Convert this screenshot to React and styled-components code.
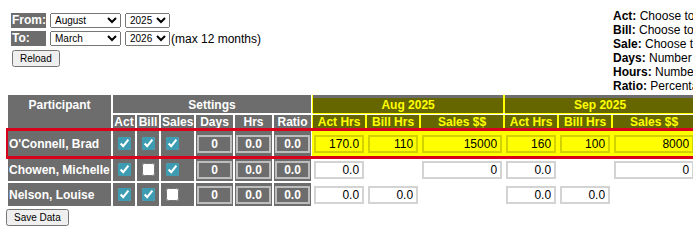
import React from "react";
import styled, { createGlobalStyle } from "styled-components";

const GlobalStyle = createGlobalStyle`
  html, body {
    overflow: hidden;
  }
  body {
    margin: 6px;
    background: #fff;
    color: #000;
    font-family: "Liberation Sans", Arial, sans-serif;
    font-size: 12px;
  }
`;

const MONTHS = [
  "January", "February", "March", "April", "May", "June",
  "July", "August", "September", "October", "November", "December",
];
const YEARS = ["2024", "2025", "2026", "2027"];

const periods = [
  { label: "Aug 2025", past: true },
  { label: "Sep 2025", past: true },
  { label: "Oct 2025" },
  { label: "Nov 2025" },
  { label: "Dec 2025" },
  { label: "Jan 2026" },
  { label: "Feb 2026" },
  { label: "Mar 2026" },
];

const legend = [
  ["Act:", "Choose to track actual hours for the participant"],
  ["Bill:", "Choose to track billable hours for the participant"],
  ["Sale:", "Choose to track sales dollars for the participant"],
  ["Days:", "Number of working days per month"],
  ["Hours:", "Number of working hours per day"],
  ["Ratio:", "Percentage of billable hours to actual hours"],
];

const blank = { act: "0.0", bill: "0.0", sales: "0" };

const participants = [
  {
    name: "O'Connell, Brad",
    act: true,
    bill: true,
    sales: true,
    highlight: true,
    values: [
      { act: "170.0", bill: "110", sales: "15000" },
      { act: "160", bill: "100", sales: "8000" },
      ...Array(6).fill(blank),
    ],
  },
  {
    name: "Chowen, Michelle",
    act: true,
    bill: false,
    sales: true,
    values: Array(8).fill(blank),
  },
  {
    name: "Nelson, Louise",
    act: true,
    bill: true,
    sales: false,
    values: Array(8).fill(blank),
  },
];

const settingCols = [103, 22, 22, 33, 37, 37, 37];
const monthCols = [52, 52, 82];
const allCols = [...settingCols, ...periods.flatMap(() => monthCols)];
const tableWidth =
  allCols.reduce((sum, w) => sum + w, 0) + (allCols.length + 1) * 2;

const TopBar = styled.div`
  display: flex;
  align-items: flex-start;
  height: 87px;
`;

const Controls = styled.div`
  box-sizing: border-box;
  flex-shrink: 0;
  width: 607px;
  padding: 7px 0 0 5px;
`;

const RangeGrid = styled.div`
  display: grid;
  grid-template-columns: 35px auto;
  column-gap: 4px;
  row-gap: 3px;
  align-items: center;
  justify-items: start;
`;

const RangeLabel = styled.div`
  box-sizing: border-box;
  width: 35px;
  padding-left: 1px;
  background: #6d6d6d;
  color: #fff;
  font-weight: bold;
  font-size: 12px;
  line-height: 15px;
  white-space: nowrap;
`;

const Pickers = styled.div`
  display: flex;
  align-items: center;
  gap: 4px;
  white-space: nowrap;
`;

const Picker = styled.select`
  margin: 0;
  font-family: "Liberation Sans", Arial, sans-serif;
  font-size: 10px;
`;

const Hint = styled.span`
  margin-left: -3px;
  font-size: 12px;
`;

const SmallButton = styled.button`
  margin: ${(p) => p.$margin || "0"};
  font-family: "Liberation Sans", Arial, sans-serif;
  font-size: 10px;
`;

const Legend = styled.div`
  padding-top: 3px;
  font-size: 12px;
  white-space: nowrap;
`;

const Sheet = styled.table`
  border-collapse: separate;
  border-spacing: 2px;
  table-layout: fixed;
  width: ${tableWidth}px;
  font-size: 12px;
`;

const Col = styled.col`
  width: ${(p) => p.$w}px;
`;

const Row = styled.tr`
  height: ${(p) => p.$h}px;
  outline: ${(p) => (p.$highlight ? "3px solid #d8001a" : "none")};
`;

const HeadCell = styled.th`
  box-sizing: border-box;
  background: #6d6d6d;
  color: #fff;
  font-weight: bold;
  line-height: 14px;
  padding: ${(p) => (p.$top ? "3px 1px 1px" : "0 1px")};
  vertical-align: ${(p) => (p.$top ? "top" : "middle")};
  white-space: nowrap;
  overflow: hidden;
`;

const MonthHead = styled(HeadCell)`
  background: ${(p) => (p.$past ? "#666600" : "#6d6d6d")};
  color: ${(p) => (p.$past ? "#ffff00" : "#fff")};
  border-top: ${(p) => (p.$top ? "3px solid #6d6d6d" : "0")};
  padding-top: 0;
  box-shadow: ${(p) =>
    p.$past ? "1px 0 0 #ffff00, -1px 0 0 #ffff00, 0 1px 0 #ffff00" : "none"};
`;

const NameCell = styled.td`
  background: #6d6d6d;
  color: #fff;
  font-weight: bold;
  padding: 0 1px;
  white-space: nowrap;
  overflow: hidden;
`;

const SettingCell = styled.td`
  background: #6d6d6d;
  padding: 0 1px;
  text-align: left;
  vertical-align: middle;
`;

const ValueCell = styled.td`
  background: ${(p) => (p.$highlight ? "#ffff00" : "#fff")};
  box-shadow: ${(p) => (p.$highlight ? "0 0 0 1px #ffff00" : "none")};
  padding: 0 1px;
  vertical-align: middle;
`;

const Check = styled.input.attrs({ type: "checkbox" })`
  display: block;
  width: 13px;
  height: 13px;
  margin: 3px 3px 3px 4px;
  accent-color: #3e9cb2;
`;

const SettingInput = styled.input`
  display: block;
  box-sizing: border-box;
  width: 35px;
  height: 18px;
  margin: 0;
  padding: 0;
  border: 2px solid #bdbdbd;
  background: transparent;
  color: #fff;
  font-family: "Liberation Sans", Arial, sans-serif;
  font-size: 12px;
  font-weight: bold;
  text-align: center;
`;

const ValueInput = styled.input`
  display: block;
  box-sizing: border-box;
  width: ${(p) => p.$w}px;
  height: 18px;
  margin: 0;
  padding: 0 3px;
  border: 2px solid ${(p) => (p.$highlight ? "#d2d200" : "#d3d3d3")};
  background: ${(p) => (p.$highlight ? "#ffff00" : "#fff")};
  color: #000;
  font-family: "Liberation Sans", Arial, sans-serif;
  font-size: 12px;
  text-align: right;
`;

const RangePicker = ({ month, year }) => (
  <>
    <Picker defaultValue={month}>
      {MONTHS.map((m) => (
        <option key={m}>{m}</option>
      ))}
    </Picker>
    <Picker defaultValue={year}>
      {YEARS.map((y) => (
        <option key={y}>{y}</option>
      ))}
    </Picker>
  </>
);

const ParticipantRow = ({ person }) => {
  const hl = !!person.highlight;
  return (
    <Row $h={hl ? 25 : 23} $highlight={hl}>
      <NameCell>{person.name}</NameCell>
      <SettingCell>
        <Check defaultChecked={person.act} />
      </SettingCell>
      <SettingCell>
        <Check defaultChecked={person.bill} />
      </SettingCell>
      <SettingCell>
        <Check defaultChecked={person.sales} />
      </SettingCell>
      <SettingCell>
        <SettingInput defaultValue="0" />
      </SettingCell>
      <SettingCell>
        <SettingInput defaultValue="0.0" />
      </SettingCell>
      <SettingCell>
        <SettingInput defaultValue="0.0" />
      </SettingCell>
      {person.values.map((v, i) => (
        <React.Fragment key={i}>
          <ValueCell $highlight={hl}>
            {person.act && (
              <ValueInput $w={50} $highlight={hl} defaultValue={v.act} />
            )}
          </ValueCell>
          <ValueCell $highlight={hl}>
            {person.bill && (
              <ValueInput $w={50} $highlight={hl} defaultValue={v.bill} />
            )}
          </ValueCell>
          <ValueCell $highlight={hl}>
            {person.sales && (
              <ValueInput $w={80} $highlight={hl} defaultValue={v.sales} />
            )}
          </ValueCell>
        </React.Fragment>
      ))}
    </Row>
  );
};

export default function App() {
  return (
    <>
      <GlobalStyle />
      <TopBar>
        <Controls>
          <RangeGrid>
            <RangeLabel>From:</RangeLabel>
            <Pickers>
              <RangePicker month="August" year="2025" />
            </Pickers>
            <RangeLabel>To:</RangeLabel>
            <Pickers>
              <RangePicker month="March" year="2026" />
              <Hint>(max 12 months)</Hint>
            </Pickers>
          </RangeGrid>
          <SmallButton $margin="4px 0 0 1px">Reload</SmallButton>
        </Controls>
        <Legend>
          {legend.map(([term, text]) => (
            <div key={term}>
              <b>{term}</b> {text}
            </div>
          ))}
        </Legend>
      </TopBar>

      <form>
        <Sheet>
          <colgroup>
            {allCols.map((w, i) => (
              <Col key={i} $w={w} />
            ))}
          </colgroup>
          <thead>
            <tr style={{ height: 18 }}>
              <HeadCell rowSpan={2} $top>
                Participant
              </HeadCell>
              <HeadCell colSpan={6} $top>
                Settings
              </HeadCell>
              {periods.map((p) => (
                <MonthHead key={p.label} colSpan={3} $top $past={p.past}>
                  {p.label}
                </MonthHead>
              ))}
            </tr>
            <tr>
              <HeadCell>Act</HeadCell>
              <HeadCell>Bill</HeadCell>
              <HeadCell>Sales</HeadCell>
              <HeadCell>Days</HeadCell>
              <HeadCell>Hrs</HeadCell>
              <HeadCell>Ratio</HeadCell>
              {periods.map((p) => (
                <React.Fragment key={p.label}>
                  <MonthHead $past={p.past}>Act Hrs</MonthHead>
                  <MonthHead $past={p.past}>Bill Hrs</MonthHead>
                  <MonthHead $past={p.past}>Sales $$</MonthHead>
                </React.Fragment>
              ))}
            </tr>
          </thead>
          <tbody>
            {participants.map((person) => (
              <ParticipantRow key={person.name} person={person} />
            ))}
          </tbody>
        </Sheet>
        <SmallButton type="button" $margin="1px 0 0 0">
          Save Data
        </SmallButton>
      </form>
    </>
  );
}
